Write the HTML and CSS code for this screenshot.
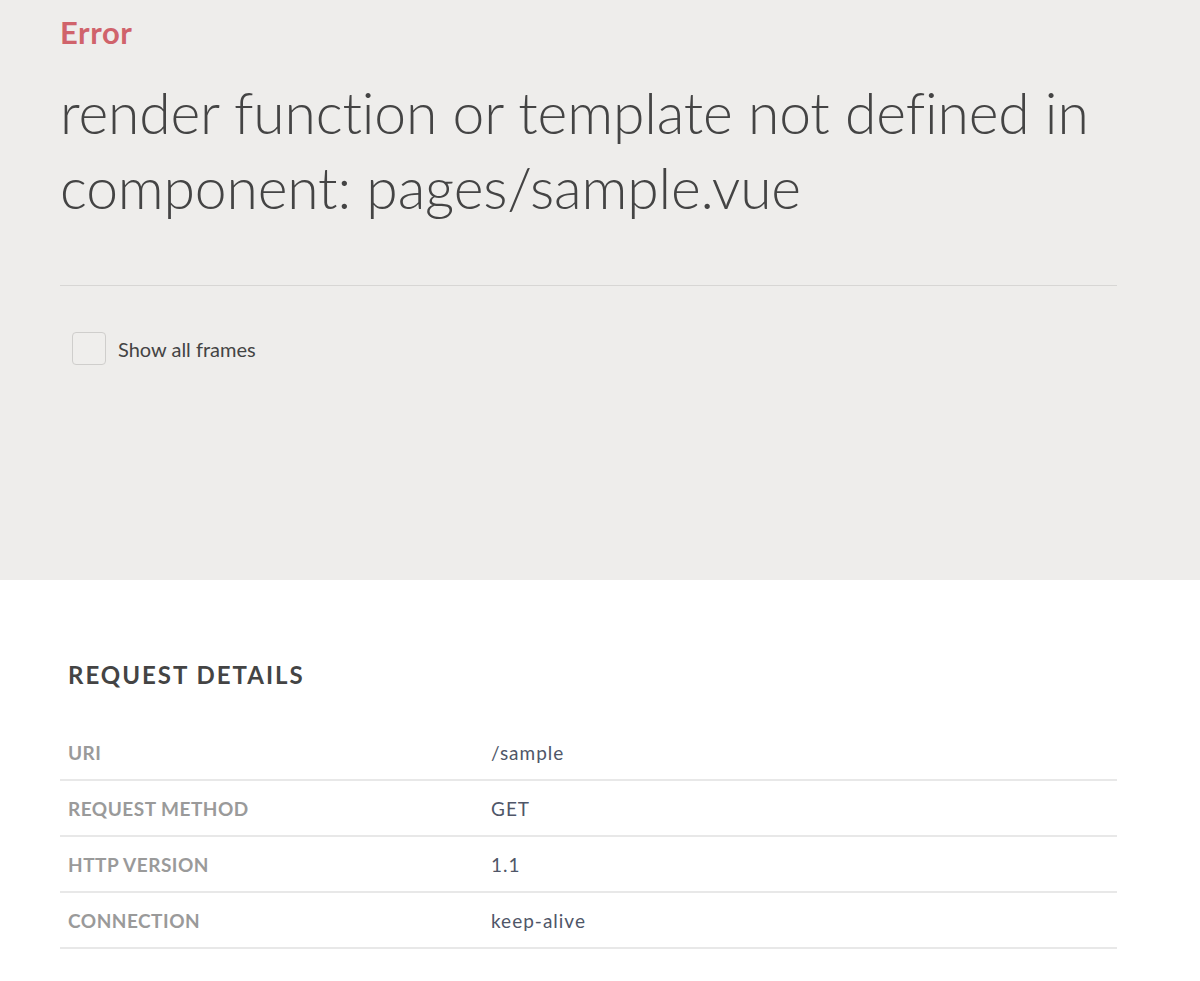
FILE: index.html
```html
<!DOCTYPE html>
<html>
<head>
<meta charset="utf-8">
<link rel="stylesheet" href="styles.css">
</head>
<body>
<section class="error-box">
  <div class="error-name">Error</div>
  <h1 class="error-message">render function or template not defined in component: pages/sample.vue</h1>
  <hr class="divider">
  <label class="frames-toggle">
    <span class="checkbox"></span>
    <span class="toggle-label">Show all frames</span>
  </label>
</section>
<section class="details">
  <h2 class="details-title">Request Details</h2>
  <table class="details-table">
    <tr><td class="key">URI</td><td class="val">/sample</td></tr>
    <tr><td class="key">Request Method</td><td class="val">GET</td></tr>
    <tr><td class="key">HTTP Version</td><td class="val">1.1</td></tr>
    <tr><td class="key">Connection</td><td class="val">keep-alive</td></tr>
  </table>
</section>
</body>
</html>
```
FILE: styles.css
```css
html, body {
  margin: 0;
  padding: 0;
  background: #ffffff;
  font-family: "Lato", "Open Sans", sans-serif;
  color: #444;
  font-variant-ligatures: none;
}
.error-box {
  background: #eeedeb;
  height: 580px;
  box-sizing: border-box;
  padding: 13px 83px 0 60px;
}
.error-name {
  color: #d0636b;
  font-weight: 700;
  font-size: 31px;
  line-height: 38px;
  letter-spacing: 0.6px;
}
.error-message {
  margin: 24px 0 0 0;
  font-weight: 300;
  font-size: 57px;
  line-height: 75px;
  color: #444;
  letter-spacing: -0.15px;
}
.divider {
  border: 0;
  border-top: 1px solid #d7d6d4;
  margin: 60px 0 0 0;
}
.frames-toggle {
  display: flex;
  align-items: center;
  gap: 12px;
  margin: 46px 0 0 12px;
}
.checkbox {
  width: 32px;
  height: 31px;
  border: 1px solid #cfcecc;
  border-radius: 4px;
  background: #efeeec;
}
.toggle-label {
  font-size: 20px;
  color: #444;
}
.details {
  padding: 79px 83px 0 60px;
}
.details-title {
  margin: 0 0 34px 8px;
  font-size: 24px;
  font-weight: 700;
  letter-spacing: 2px;
  text-transform: uppercase;
  color: #444;
  line-height: 32px;
}
.details-table {
  width: 100%;
  border-collapse: collapse;
}
.details-table td {
  height: 54px;
  border-bottom: 2px solid #e8e8e8;
  padding: 0 8px;
  font-size: 19px;
}
.key {
  width: 407px;
  color: #9a9a9a;
  font-weight: 700;
  text-transform: uppercase;
  letter-spacing: 0.5px;
}
.val {
  color: #4f5668;
  font-size: 20px;
  letter-spacing: 1px;
}
```
